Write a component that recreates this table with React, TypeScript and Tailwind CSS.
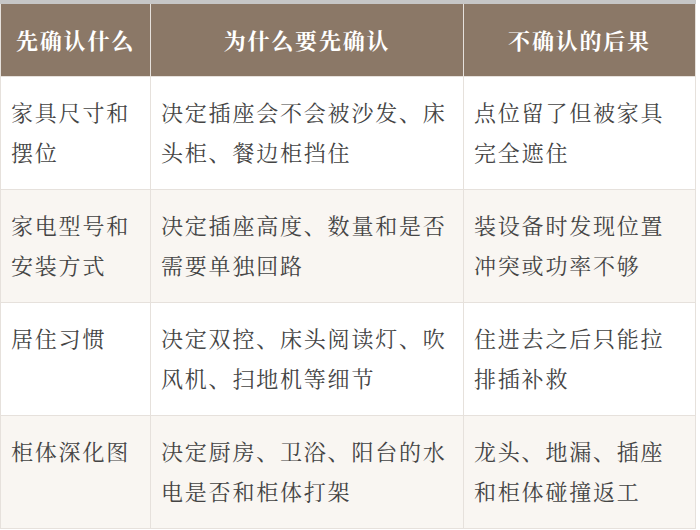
import React from 'react';

const rows = [
  ['家具尺寸和摆位', '决定插座会不会被沙发、床头柜、餐边柜挡住', '点位留了但被家具完全遮住'],
  ['家电型号和安装方式', '决定插座高度、数量和是否需要单独回路', '装设备时发现位置冲突或功率不够'],
  ['居住习惯', '决定双控、床头阅读灯、吹风机、扫地机等细节', '住进去之后只能拉排插补救'],
  ['柜体深化图', '决定厨房、卫浴、阳台的水电是否和柜体打架', '龙头、地漏、插座和柜体碰撞返工'],
];

const headers = ['先确认什么', '为什么要先确认', '不确认的后果'];

export default function App() {
  return (
    <div
      className="w-[700px] h-[530px] bg-white"
      style={{ fontFamily: '"Liberation Serif", "Noto Serif CJK SC", "Noto Sans CJK SC", serif' }}
    >
      <div className="w-[696px] border-t-4 border-[#c6c6c6]">
        <table className="w-full border-collapse table-fixed text-[22px] tracking-[1.8px] text-[#444]">
          <colgroup>
            <col className="w-[150px]" />
            <col className="w-[313px]" />
            <col />
          </colgroup>
          <thead>
            <tr className="h-[72px] bg-[#8b7867] text-white">
              {headers.map((h) => (
                <th key={h} className="border border-[#e6e1dc] border-t-0 px-3 pt-[4px] font-bold text-center">
                  {h}
                </th>
              ))}
            </tr>
          </thead>
          <tbody>
            {rows.map((r, i) => (
              <tr key={i} className={i % 2 === 1 ? 'bg-[#f9f6f2]' : 'bg-white'}>
                {r.map((c, j) => (
                  <td
                    key={j}
                    className="h-[113px] border border-[#e6e1dc] pl-[10px] pr-2 pt-[17px] pb-[15px] align-top leading-[40px]"
                  >
                    {c}
                  </td>
                ))}
              </tr>
            ))}
          </tbody>
        </table>
      </div>
    </div>
  );
}
